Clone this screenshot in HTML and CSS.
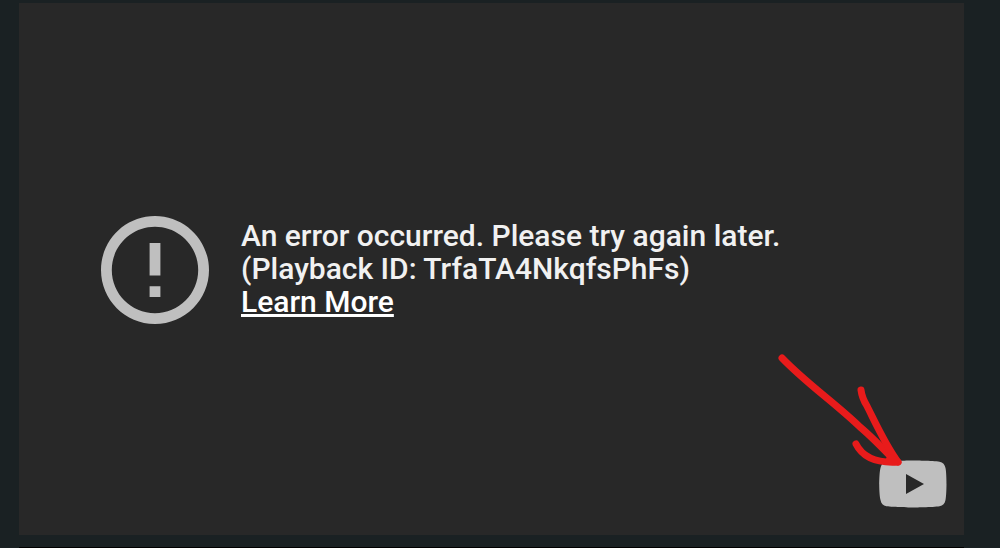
FILE: index.html
```html
<!DOCTYPE html>
<html lang="en">
<head>
  <meta charset="UTF-8" />
  <meta name="viewport" content="width=device-width, initial-scale=1.0" />
  <title>Video Player</title>
  <link rel="stylesheet" href="styles.css">
</head>
<body>
  <main class="page">
    <div class="player">
      <div class="error">
        <svg class="error-icon" viewBox="2 2 20 20" aria-hidden="true">
          <path d="M11 15h2v2h-2zm0-8h2v6h-2zm.99-5C6.47 2 2 6.48 2 12s4.47 10 9.99 10C17.52 22 22 17.52 22 12S17.52 2 11.99 2zM12 20c-4.42 0-8-3.58-8-8s3.58-8 8-8 8 3.58 8 8-3.58 8-8 8z" />
        </svg>
        <div class="error-text">
          <p>An error occurred. Please try again later.</p>
          <p>(Playback ID: TrfaTA4NkqfsPhFs)</p>
          <a href="#">Learn More</a>
        </div>
      </div>

      <a class="logo" href="#" aria-label="Watch on YouTube">
        <svg viewBox="0 0 68 48" aria-hidden="true">
          <path class="logo-body" d="M66.5 8C65.800 4.500 64 2.300 60.500 1.700C54 .6 34 .5 34 .5S14 .6 7.500 1.700C4 2.300 2.200 4.500 1.500 8C.2 13 .2 24 .2 24s0 11 1.300 16C2.200 43.500 4 45.700 7.500 46.300C14 47.400 34 47.500 34 47.500s20-.1 26.500-1.200C64 45.700 65.800 43.500 66.500 40c1-5 1-16 1-16s0-11-1-16z" />
          <path class="logo-play" d="M27 14L45 24L27 34z" />
        </svg>
      </a>

      <svg class="arrow" viewBox="0 0 132 120" aria-hidden="true">
        <path d="M8 8C33 34 60 52 86 77Q98 87 121 111" />
        <path d="M87 40Q88 48 93 56C102 74 112 96 124 112" />
        <path d="M82 94Q92 114 124 112L116 108" />
      </svg>
    </div>
    <div class="line"></div>
  </main>
</body>
</html>
```
FILE: styles.css
```css
* {
  margin: 0;
  padding: 0;
  box-sizing: border-box;
}

body {
  background-color: #1a2123;
  font-family: Roboto, 'Liberation Sans', sans-serif;
}

.page {
  display: flex;
  flex-direction: column;
  gap: 12px;
  min-height: 100vh;
  padding: 3px 36px 0 19px;
}

.player {
  flex: 1;
  position: relative;
  display: flex;
  align-items: center;
  padding: 2px 82px 0;
  background-color: #282828;
}

.error {
  display: flex;
  align-items: center;
  gap: 32px;
}

.error-icon {
  flex-shrink: 0;
  width: 108px;
  height: 108px;
  fill: #bfbfbf;
}

.error-text {
  padding-bottom: 3px;
  color: #f1f1f1;
  font-size: 30px;
  font-weight: 500;
  line-height: 33px;
}

.error-text a {
  color: #fff;
}

/* player logo */
.logo {
  position: absolute;
  right: 17px;
  bottom: 27px;
  width: 68px;
  height: 48px;
}

.logo svg {
  display: block;
}

.logo-body {
  fill: #bfbfbf;
}

.logo-play {
  fill: #282828;
}

/* hand drawn arrow over the logo */
.arrow {
  position: absolute;
  right: 58px;
  bottom: 65px;
  width: 132px;
  height: 120px;
  fill: none;
  stroke: #e81b1b;
  stroke-width: 7;
  stroke-linecap: round;
  stroke-linejoin: round;
  pointer-events: none;
}

.line {
  height: 1px;
  background-color: #000;
}
```
